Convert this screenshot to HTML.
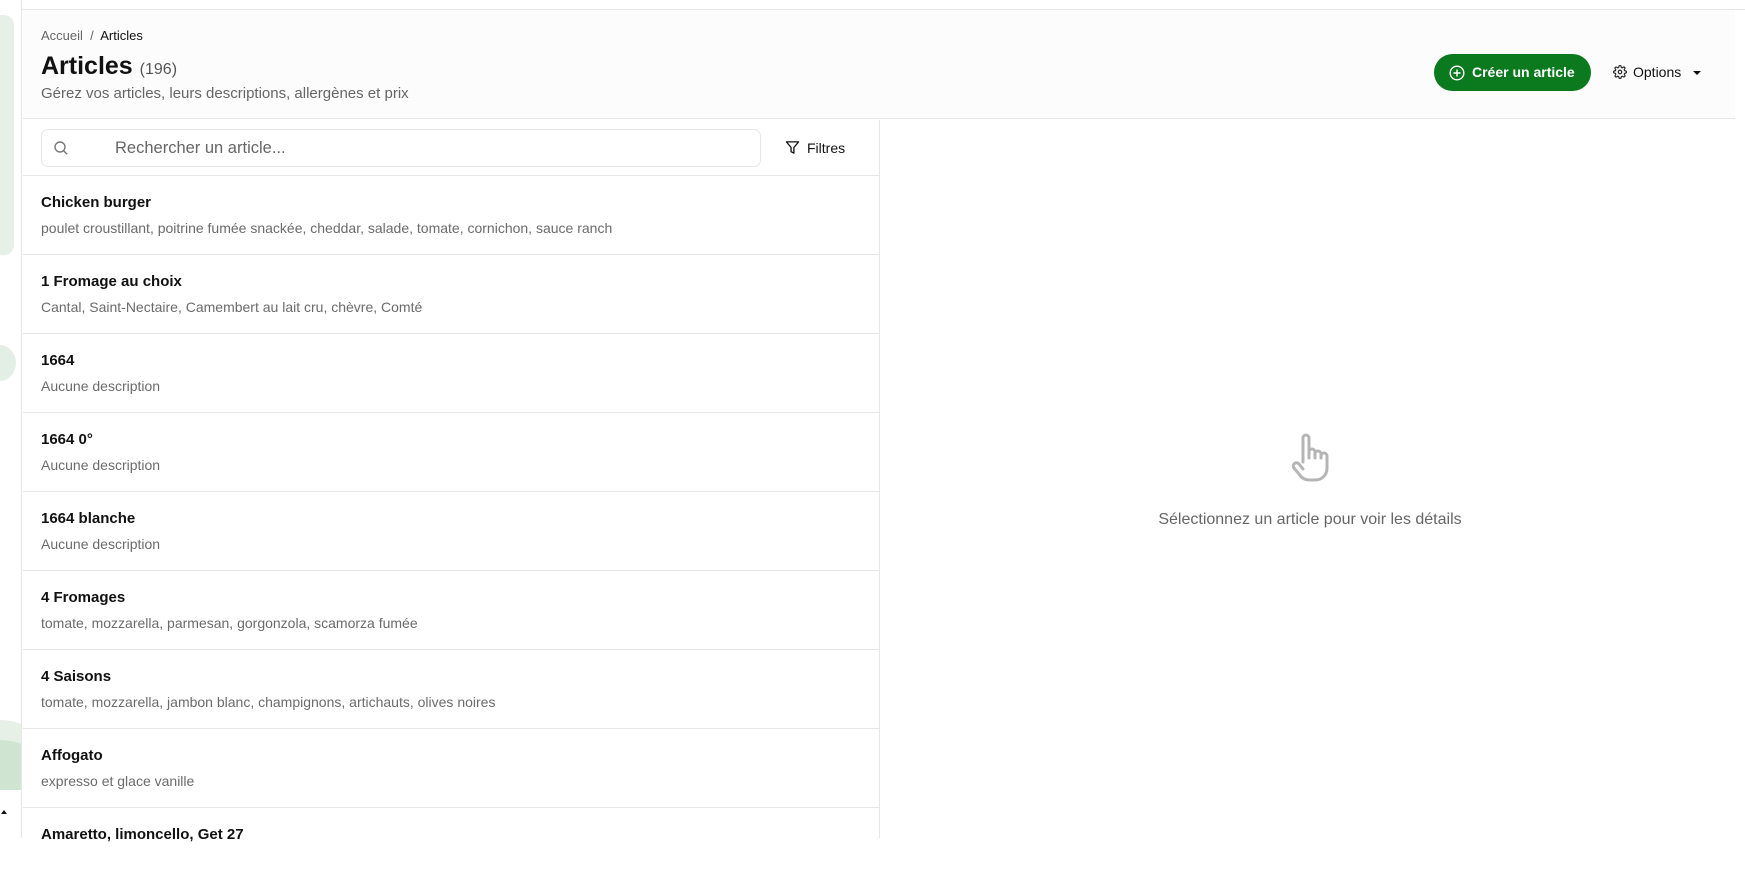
<!DOCTYPE html>
<html><head><meta charset="utf-8"><style>
*{box-sizing:border-box;margin:0;padding:0}
body{width:1745px;height:838px;overflow:hidden;background:#fff;font-family:"Liberation Sans",sans-serif;position:relative;color:#111}
.abs{position:absolute}
.side{left:0;top:0;width:22px;height:838px;border-right:1px solid #e6e6e6;background:#fff;overflow:hidden}
.topline{left:22px;top:9px;width:1723px;height:1px;background:#e6e6e6}
.header{left:23px;top:10px;width:1712px;height:109px;background:#fcfcfc;border-bottom:1px solid #e6e6e6}
.row{position:absolute;left:23px;width:856px;height:79px;border-bottom:1px solid #e6e6e6}
.row b{position:absolute;left:18px;top:18px;font-size:15px;font-weight:bold;color:#111}
.row span{position:absolute;left:18px;top:44px;font-size:14px;color:#6b6b6b}
</style></head><body>
<div class="abs side">
 <div class="abs" style="left:-20px;top:15px;width:34px;height:240px;border-radius:10px;background:#e6f0e7"></div>
 <div class="abs" style="left:-16px;top:345px;width:32px;height:36px;border-radius:50%;background:#e3efe5"></div>
 <div class="abs" style="left:-60px;top:720px;width:120px;height:120px;border-radius:50%;background:#e6f0e7"></div>
 <div class="abs" style="left:-40px;top:740px;width:80px;height:50px;border-radius:50% 50% 0 0;background:#cfe5d2"></div>
 <div class="abs" style="left:0;top:790px;width:22px;height:48px;background:#fff"></div>
 <div class="abs" style="left:1px;top:810px;width:0;height:0;border-left:3px solid transparent;border-right:3px solid transparent;border-bottom:4px solid #111"></div>
</div>
<div class="abs topline"></div>
<div class="abs header">
 <div class="abs" style="left:18px;top:18px;font-size:13px;color:#666">Accueil &nbsp;/&nbsp; <span style="color:#111">Articles</span></div>
 <div class="abs" style="left:18px;top:42px;font-size:25px;font-weight:bold;color:#111">Articles <span style="font-size:16px;font-weight:normal;color:#555">(196)</span></div>
 <div class="abs" style="left:18px;top:75px;font-size:15px;color:#666">Gérez vos articles, leurs descriptions, allergènes et prix</div>
 <div class="abs" style="left:1411px;top:44px;width:157px;height:37px;border-radius:19px;background:#0b7a1f;color:#fff;font-size:14px;font-weight:bold;line-height:37px;padding-left:38px">Créer un article
  <svg class="abs" style="left:15px;top:11px" width="16" height="16" viewBox="0 0 16 16" fill="none" stroke="#fff" stroke-width="1.4"><circle cx="8" cy="8" r="6.8"/><path d="M8 4.5v7M4.5 8h7"/></svg></div>
 <div class="abs" style="left:1590px;top:54px;font-size:14px;color:#111">
  <svg style="vertical-align:-2px;margin-right:6px" width="14" height="14" viewBox="0 0 24 24" fill="none" stroke="#222" stroke-width="2"><circle cx="12" cy="12" r="3"/><path d="M19.4 15a1.7 1.7 0 0 0 .3 1.8l.1.1a2 2 0 1 1-2.8 2.8l-.1-.1a1.7 1.7 0 0 0-1.8-.3 1.7 1.7 0 0 0-1 1.5V21a2 2 0 1 1-4 0v-.1a1.7 1.7 0 0 0-1.1-1.5 1.7 1.7 0 0 0-1.8.3l-.1.1a2 2 0 1 1-2.8-2.8l.1-.1a1.7 1.7 0 0 0 .3-1.8 1.7 1.7 0 0 0-1.5-1H3a2 2 0 1 1 0-4h.1a1.7 1.7 0 0 0 1.5-1.1 1.7 1.7 0 0 0-.3-1.8l-.1-.1a2 2 0 1 1 2.8-2.8l.1.1a1.7 1.7 0 0 0 1.8.3H9a1.7 1.7 0 0 0 1-1.5V3a2 2 0 1 1 4 0v.1a1.7 1.7 0 0 0 1 1.5 1.7 1.7 0 0 0 1.8-.3l.1-.1a2 2 0 1 1 2.8 2.8l-.1.1a1.7 1.7 0 0 0-.3 1.8V9a1.7 1.7 0 0 0 1.5 1H21a2 2 0 1 1 0 4h-.1a1.7 1.7 0 0 0-1.5 1z"/></svg>Options <span style="display:inline-block;margin-left:8px;vertical-align:2px;border-left:4px solid transparent;border-right:4px solid transparent;border-top:4px solid #111"></span></div>
</div>
<div class="abs" style="left:879px;top:120px;width:1px;height:718px;background:#e6e6e6"></div>
<div class="abs" style="left:23px;top:120px;width:856px;height:56px;border-bottom:1px solid #e6e6e6">
 <div class="abs" style="left:18px;top:9px;width:720px;height:38px;border:1px solid #e6e6e6;border-radius:7px;background:#fff">
  <svg class="abs" style="left:11px;top:10px" width="16" height="16" viewBox="0 0 16 16" fill="none" stroke="#777" stroke-width="1.4"><circle cx="7" cy="7" r="5"/><path d="M10.7 10.7l3.5 3.5"/></svg>
  <div class="abs" style="left:73px;top:9px;font-size:16.5px;color:#666">Rechercher un article...</div>
 </div>
 <svg class="abs" style="left:762px;top:20px" width="15" height="15" viewBox="0 0 16 16" fill="none" stroke="#111" stroke-width="1.4" stroke-linejoin="round"><path d="M1.5 2h13l-5 6v6l-3-1.5V8z"/></svg>
 <div class="abs" style="left:784px;top:20px;font-size:14px;color:#111">Filtres</div>
</div>
<div class="row" style="top:176px"><b>Chicken burger</b><span>poulet croustillant, poitrine fumée snackée, cheddar, salade, tomate, cornichon, sauce ranch</span></div>
<div class="row" style="top:255px"><b>1 Fromage au choix</b><span>Cantal, Saint-Nectaire, Camembert au lait cru, chèvre, Comté</span></div>
<div class="row" style="top:334px"><b>1664</b><span>Aucune description</span></div>
<div class="row" style="top:413px"><b>1664 0°</b><span>Aucune description</span></div>
<div class="row" style="top:492px"><b>1664 blanche</b><span>Aucune description</span></div>
<div class="row" style="top:571px"><b>4 Fromages</b><span>tomate, mozzarella, parmesan, gorgonzola, scamorza fumée</span></div>
<div class="row" style="top:650px"><b>4 Saisons</b><span>tomate, mozzarella, jambon blanc, champignons, artichauts, olives noires</span></div>
<div class="row" style="top:729px"><b>Affogato</b><span>expresso et glace vanille</span></div>
<div class="row" style="top:808px;border:none"><b>Amaretto, limoncello, Get 27</b></div>
<svg class="abs" style="left:1288px;top:432px" width="44" height="52" viewBox="0 0 44 52" fill="none" stroke="#b5b5b5" stroke-width="3" stroke-linecap="round" stroke-linejoin="round"><path d="M15 30V6a3 3 0 0 1 6 0v20M21 20a3 3 0 0 1 6 0v6M27 22a3 3 0 0 1 6 0v4M33 24a3 3 0 0 1 6 0v12c0 7-5 12-12 12h-6c-5 0-8-3-10-6L6 36a3 3 0 0 1 5-4l4 5"/></svg>
<div class="abs" style="left:1060px;top:511px;width:500px;text-align:center;font-size:16px;color:#666">Sélectionnez un article pour voir les détails</div>
</body></html>
